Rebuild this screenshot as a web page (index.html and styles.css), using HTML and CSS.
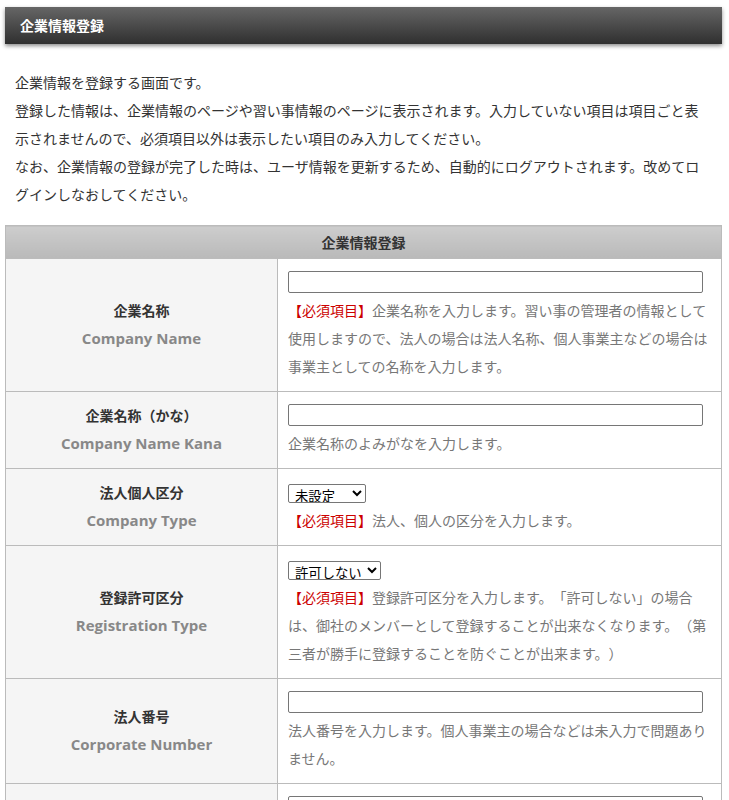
FILE: index.html
```html
<!DOCTYPE html>
<html lang="ja">
<head>
<meta charset="utf-8">
<title>企業情報登録</title>
<link rel="stylesheet" href="styles.css">
</head>
<body>
<div class="page">
  <h1 class="page-title">企業情報登録</h1>
  <div class="intro">
    <p>企業情報を登録する画面です。</p>
    <p>登録した情報は、企業情報のページや習い事情報のページに表示されます。入力していない項目は項目ごと表示されませんので、必須項目以外は表示したい項目のみ入力してください。</p>
    <p>なお、企業情報の登録が完了した時は、ユーザ情報を更新するため、自動的にログアウトされます。改めてログインしなおしてください。</p>
  </div>
  <table class="form-table">
    <thead>
      <tr><th colspan="2" class="table-head">企業情報登録</th></tr>
    </thead>
    <tbody>
      <tr>
        <th class="label"><span class="ja">企業名称</span><span class="en">Company Name</span></th>
        <td class="field">
          <input type="text" class="text-input">
          <p class="desc"><span class="req">【必須項目】</span>企業名称を入力します。習い事の管理者の情報として使用しますので、法人の場合は法人名称、個人事業主などの場合は事業主としての名称を入力します。</p>
        </td>
      </tr>
      <tr>
        <th class="label"><span class="ja">企業名称（かな）</span><span class="en">Company Name Kana</span></th>
        <td class="field">
          <input type="text" class="text-input">
          <p class="desc">企業名称のよみがなを入力します。</p>
        </td>
      </tr>
      <tr>
        <th class="label"><span class="ja">法人個人区分</span><span class="en">Company Type</span></th>
        <td class="field">
          <select class="select select-type"><option>未設定</option><option>法人</option><option>個人</option></select>
          <p class="desc"><span class="req">【必須項目】</span>法人、個人の区分を入力します。</p>
        </td>
      </tr>
      <tr>
        <th class="label"><span class="ja">登録許可区分</span><span class="en">Registration Type</span></th>
        <td class="field">
          <select class="select select-reg"><option>許可しない</option><option>許可する</option></select>
          <p class="desc"><span class="req">【必須項目】</span>登録許可区分を入力します。「許可しない」の場合は、御社のメンバーとして登録することが出来なくなります。（第三者が勝手に登録することを防ぐことが出来ます。）</p>
        </td>
      </tr>
      <tr>
        <th class="label"><span class="ja">法人番号</span><span class="en">Corporate Number</span></th>
        <td class="field">
          <input type="text" class="text-input">
          <p class="desc">法人番号を入力します。個人事業主の場合などは未入力で問題ありません。</p>
        </td>
      </tr>
      <tr>
        <th class="label"><span class="ja">代表者名</span><span class="en">Representative</span></th>
        <td class="field">
          <input type="text" class="text-input">
          <p class="desc">代表者名を入力します。法人の場合は代表取締役などの氏名、個人事業主の場合は事業主の氏名を入力します。</p>
        </td>
      </tr>
    </tbody>
  </table>
</div>
</body>
</html>
```
FILE: styles.css
```css
* { box-sizing: border-box; }
html, body {
  margin: 0;
  padding: 0;
  background: #fff;
}
body {
  font-family: "Noto Sans CJK JP", "Noto Sans", sans-serif;
  font-size: 14px;
  color: #333;
  text-spacing-trim: space-all;
}
.page {
  padding: 7px 7px 0 5px;
}
.page-title {
  margin: 0;
  height: 37px;
  line-height: 37px;
  padding: 0 15px;
  font-size: 14px;
  font-weight: bold;
  color: #fff;
  background: linear-gradient(to bottom, #666 0%, #2f2f2f 100%);
  box-shadow: 0 2px 4px rgba(0, 0, 0, 0.45);
}
.intro {
  padding: 24px 10px 17px 10px;
}
.intro p {
  margin: 0;
  line-height: 28px;
  font-size: 14px;
  color: #333;
}
.form-table {
  width: 100%;
  border-collapse: collapse;
  border: 1px solid #bbb;
}
.table-head {
  height: 33px;
  padding: 0;
  font-size: 14px;
  font-weight: bold;
  color: #333;
  text-align: center;
  background: linear-gradient(to bottom, #cdcdcd 0%, #b9b9b9 100%);
  border: 1px solid #bbb;
}
.label {
  width: 272px;
  background: #f5f5f5;
  border: 1px solid #bbb;
  vertical-align: middle;
  text-align: center;
  padding: 0 10px 2px 10px;
  font-weight: bold;
}
.label .ja {
  display: block;
  line-height: 28px;
  color: #333;
  font-size: 14px;
}
.label .en {
  display: block;
  line-height: 28px;
  color: #888;
  font-size: 15px;
  font-family: "Open Sans", "Noto Sans", sans-serif;
}
.field {
  border: 1px solid #bbb;
  padding: 12px 10px 11px 10px;
  vertical-align: top;
  text-align: left;
}
.text-input {
  display: block;
  width: 415px;
  height: 22px;
  margin: 0;
  border: 1px solid #767676;
  border-radius: 2px;
  background: #fff;
  font-size: 13px;
}
.select {
  display: block;
  height: 19px;
  margin: 3px 0 0 0;
  padding: 0 0 0 2px;
  border: 1px solid #767676;
  border-radius: 2px;
  background: #fff;
  color: #000;
  font-family: "Noto Sans CJK JP", sans-serif;
  font-size: 13.33px;
  line-height: 17px;
}
.select-type { width: 78px; }
.select-reg { width: 93px; }
.desc {
  margin: 3px 0 0 0;
  line-height: 28px;
  font-size: 14px;
  color: #777;
}
.req {
  color: #c00;
}
```
